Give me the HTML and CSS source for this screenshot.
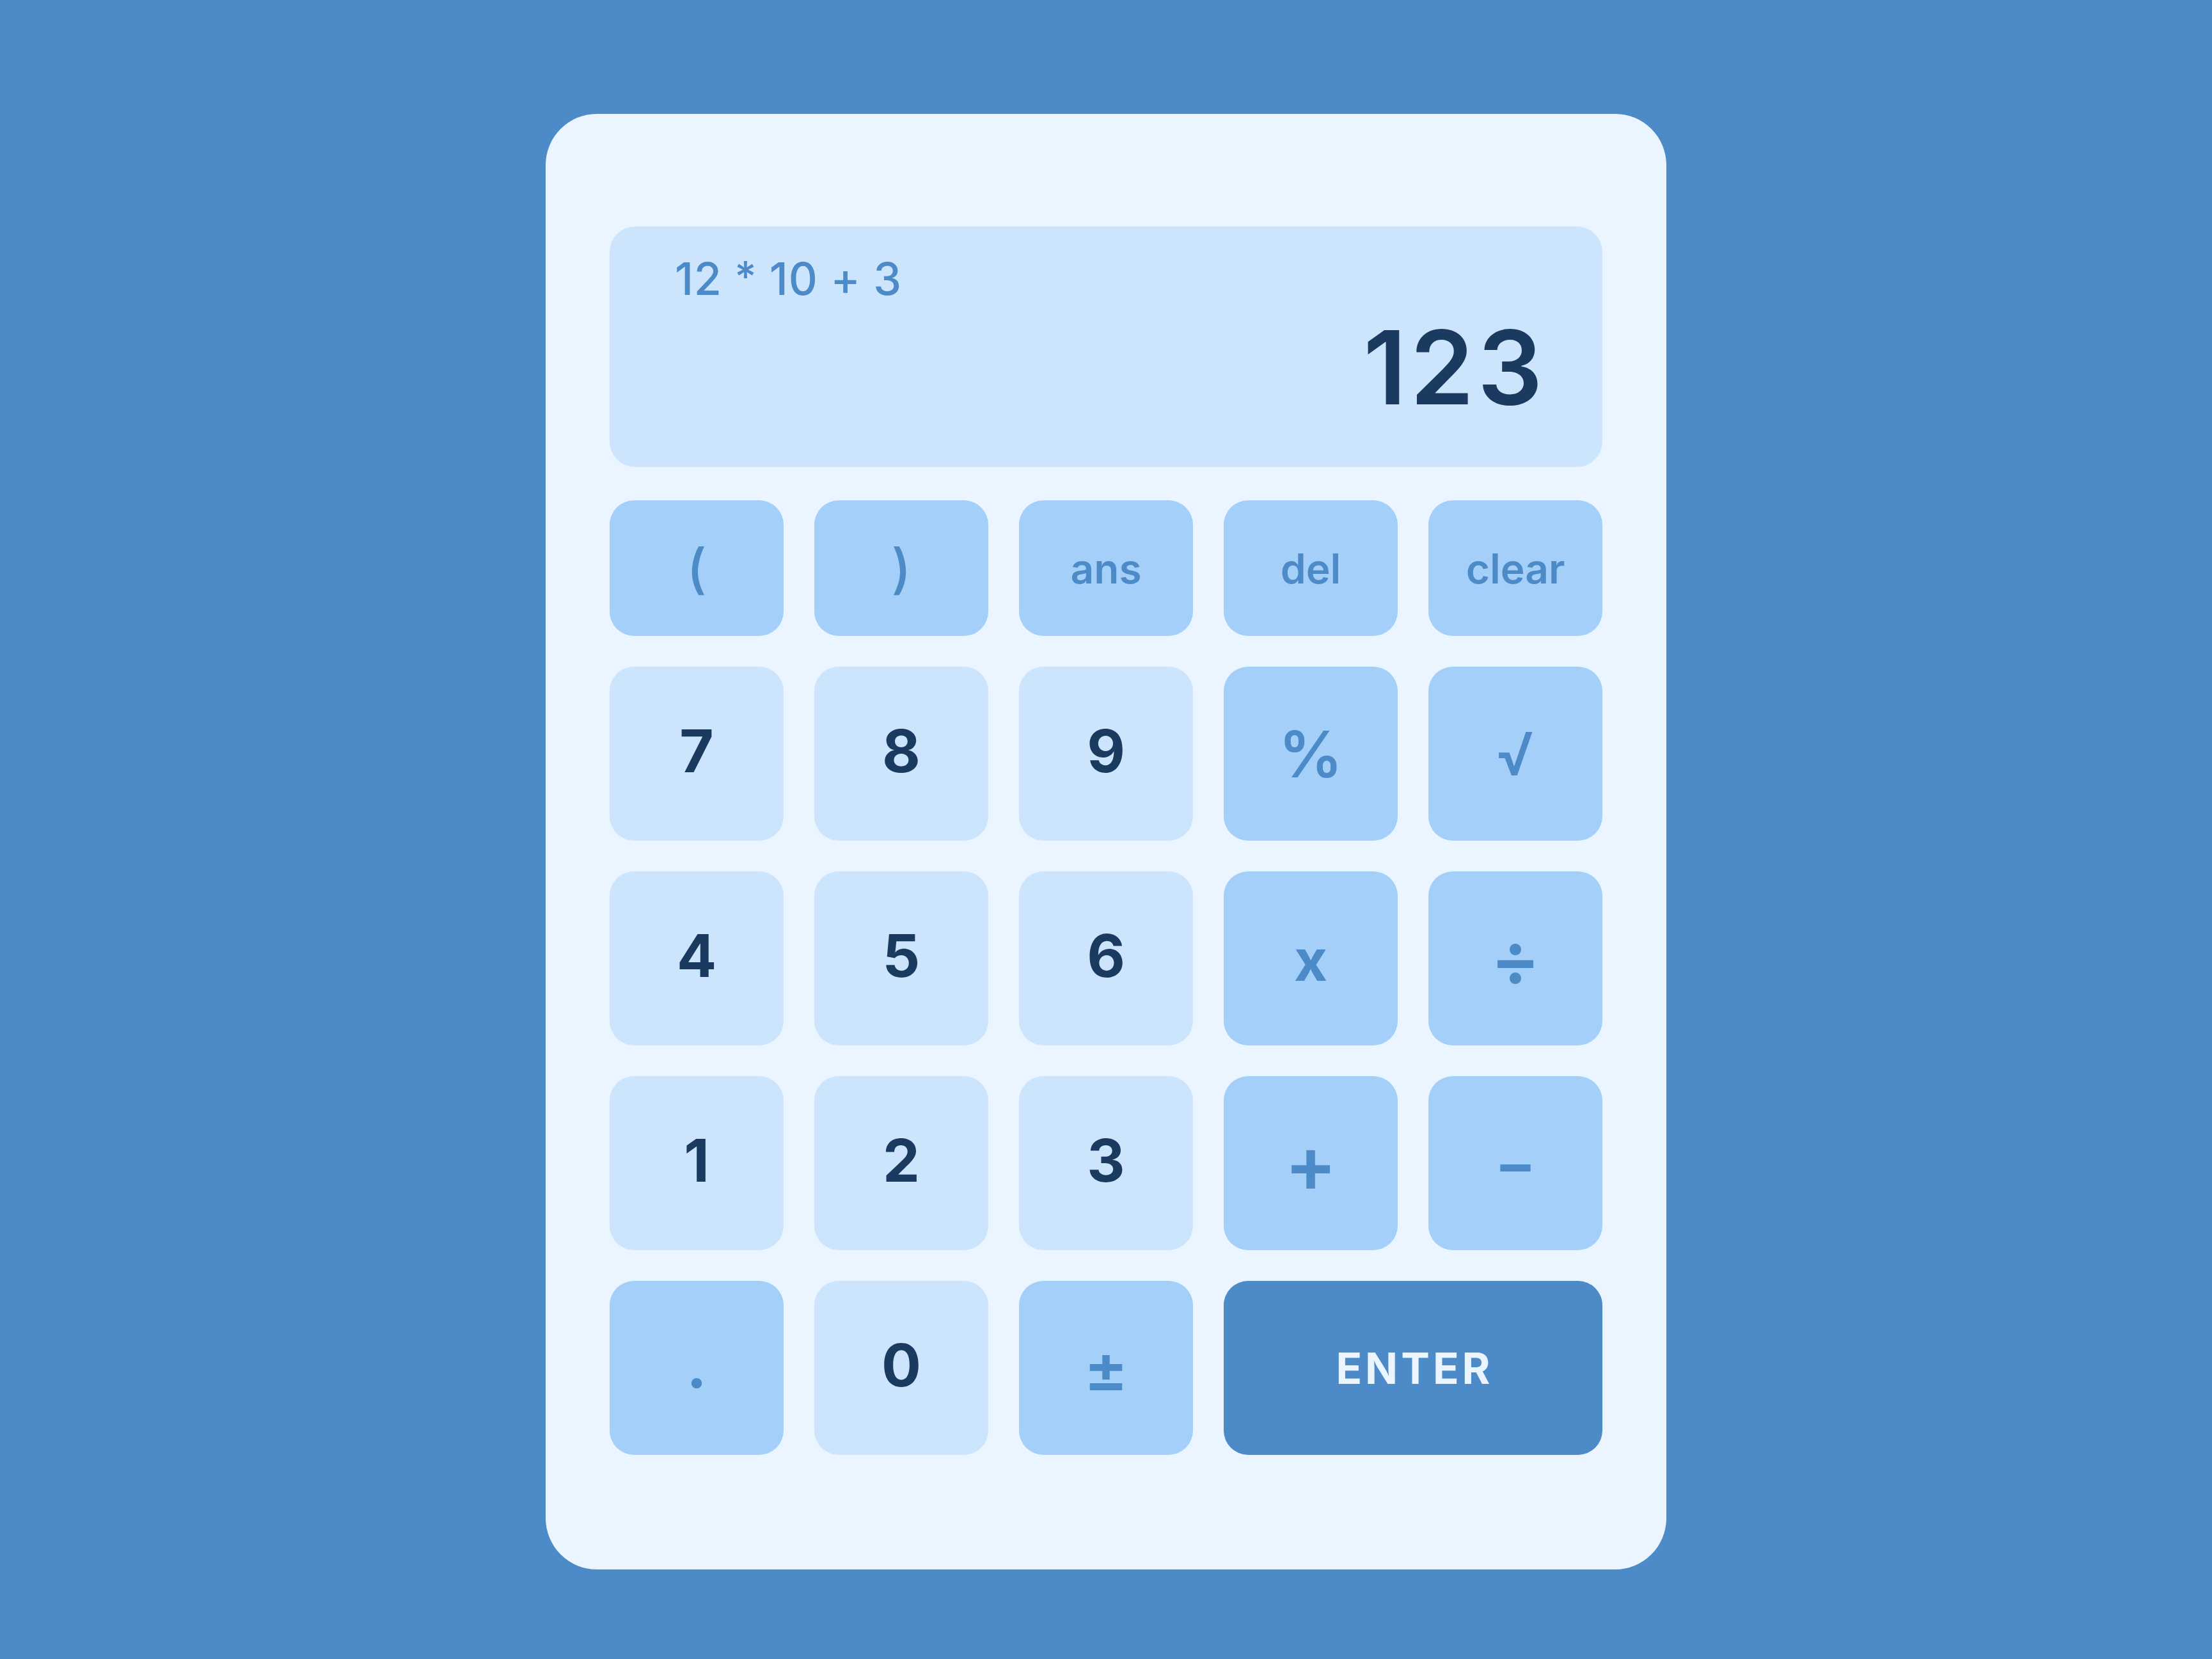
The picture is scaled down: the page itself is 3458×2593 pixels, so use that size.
FILE: index.html
```html
<!DOCTYPE html>
<html lang="en">
<head>
<meta charset="utf-8">
<title>Calculator</title>
<link rel="stylesheet" href="styles.css">
</head>
<body>
<main class="calc">
  <section class="display">
    <div class="expr">12 <span class="star">*</span> 10 + 3</div>
    <div class="result">123</div>
  </section>
  <section class="keys">
    <button class="key op paren">(</button>
    <button class="key op paren">)</button>
    <button class="key op word">ans</button>
    <button class="key op word">del</button>
    <button class="key op word">clear</button>

    <button class="key num">7</button>
    <button class="key num">8</button>
    <button class="key num">9</button>
    <button class="key op pct">%</button>
    <button class="key op sqrt">√</button>

    <button class="key num">4</button>
    <button class="key num">5</button>
    <button class="key num">6</button>
    <button class="key op times">x</button>
    <button class="key op div">÷</button>

    <button class="key num">1</button>
    <button class="key num">2</button>
    <button class="key num">3</button>
    <button class="key op plus">+</button>
    <button class="key op minus">−</button>

    <button class="key op dot">.</button>
    <button class="key num">0</button>
    <button class="key op pm">±</button>
    <button class="key enter">ENTER</button>
  </section>
</main>
</body>
</html>
```

FILE: styles.css
```css
* { box-sizing: border-box; }

html, body {
  margin: 0;
  padding: 0;
}

body {
  width: 3458px;
  height: 2593px;
  background: #4d8bc8;
  display: flex;
  justify-content: center;
  align-items: flex-start;
  padding-top: 178px;
  font-family: "Inter", "Lato", "DejaVu Sans", sans-serif;
}

.calc {
  width: 1752px;
  height: 2275px;
  background: #ebf5ff;
  border-radius: 80px;
  padding: 176px 100px 0 100px;
  display: flex;
  flex-direction: column;
}

.display {
  height: 376px;
  background: #cce5fd;
  border-radius: 40px;
  padding: 47px 88px 0 102px;
  display: flex;
  flex-direction: column;
}

.expr {
  font-size: 70px;
  line-height: 70px;
  height: 70px;
  font-weight: 500;
  color: #4d8bc8;
  letter-spacing: 0.8px;
  white-space: nowrap;
}

.star {
  font-size: 66px;
  line-height: 0;
  vertical-align: 5px;
}

.result {
  margin-top: 24px;
  font-size: 160px;
  line-height: 158px;
  font-weight: 600;
  letter-spacing: 5.5px;
  color: #1a3b5f;
  text-align: right;
}

.keys {
  margin-top: 52px;
  display: grid;
  grid-template-columns: repeat(5, 272px);
  grid-template-rows: 212px repeat(4, 272px);
  gap: 48px;
}

.key {
  border: 0;
  margin: 0;
  padding: 0;
  border-radius: 38px;
  font-family: inherit;
  display: flex;
  align-items: center;
  justify-content: center;
  line-height: normal;
}

.num {
  background: #cce5fd;
  color: #1a3b5f;
  font-size: 92px;
  font-weight: 700;
  padding-bottom: 9px;
}

.op {
  background: #a4cff8;
  color: #4d8bc8;
  font-weight: 600;
}

.word { font-size: 64px; }
.paren { font-size: 84px; font-weight: 500; }
.pct { font-size: 100px; font-weight: 600; }
.sqrt { font-size: 94px; font-weight: 500; }
.times { font-size: 90px; font-weight: 700; padding-top: 4px; }
.div { font-size: 116px; font-weight: 600; }
.plus { font-size: 122px; font-weight: 600; }
.minus { font-size: 98px; font-weight: 600; }
.pm { font-size: 104px; font-weight: 600; }
.dot { font-size: 96px; font-weight: 700; padding-bottom: 9px; }

.enter {
  grid-column: span 2;
  background: #4d8bc8;
  color: #ebf5ff;
  font-size: 67px;
  font-weight: 700;
  letter-spacing: 5px;
  padding-left: 5px;
}
```
